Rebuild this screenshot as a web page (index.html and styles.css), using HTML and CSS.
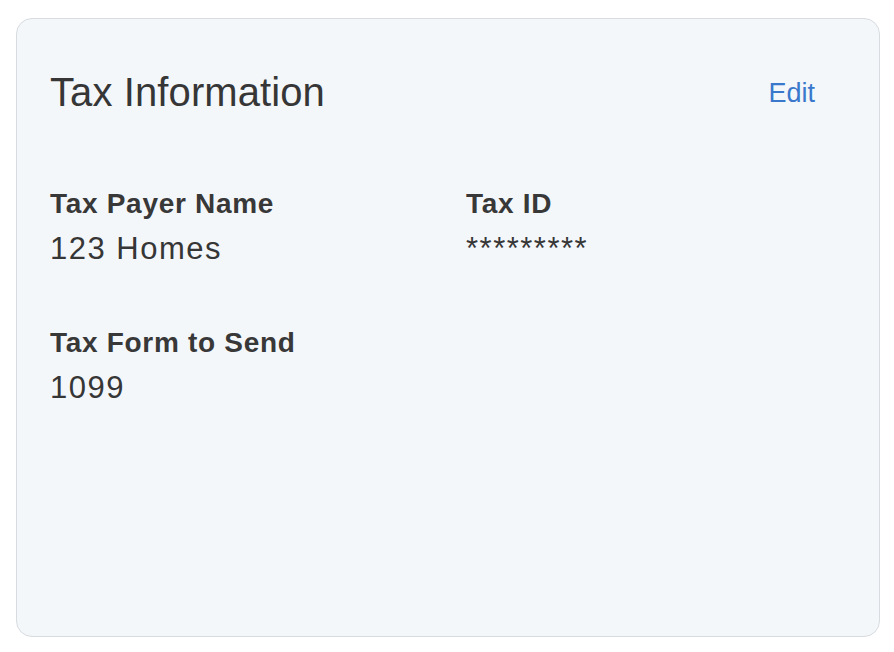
FILE: index.html
```html
<!DOCTYPE html>
<html>
<head>
<meta charset="utf-8">
<link rel="stylesheet" href="styles.css">
</head>
<body>
<section class="card">
  <header class="card-header">
    <h2 class="card-title">Tax Information</h2>
    <a class="edit-link" href="#">Edit</a>
  </header>
  <div class="fields">
    <div class="field">
      <div class="field-label">Tax Payer Name</div>
      <div class="field-value">123 Homes</div>
    </div>
    <div class="field">
      <div class="field-label">Tax ID</div>
      <div class="field-value">*********</div>
    </div>
    <div class="field">
      <div class="field-label">Tax Form to Send</div>
      <div class="field-value">1099</div>
    </div>
  </div>
</section>
</body>
</html>
```
FILE: styles.css
```css
html, body {
  margin: 0;
  padding: 0;
  background: #ffffff;
}

body {
  padding: 18px 14px 15px 16px;
  font-family: "Liberation Sans", Arial, sans-serif;
  color: #363636;
}

.card {
  box-sizing: border-box;
  height: 619px;
  background: #f4f7fa;
  border: 1.5px solid #d8dbdf;
  border-radius: 16px;
  padding: 50px 64px 0 33px;
}

.card-header {
  display: flex;
  align-items: center;
  justify-content: space-between;
}

.card-title {
  margin: 0;
  font-size: 40px;
  line-height: 46px;
  font-weight: 400;
  letter-spacing: 0.1px;
  color: #363636;
}

.edit-link {
  font-size: 27px;
  line-height: 31px;
  margin-top: 3px;
  color: #3a78cc;
  text-decoration: none;
}

.fields {
  margin-top: 72px;
  display: grid;
  grid-template-columns: 416px 1fr;
  row-gap: 59px;
}

.field-label {
  font-size: 28px;
  line-height: 34px;
  font-weight: 700;
  letter-spacing: 0.7px;
  color: #383838;
}

.field-value {
  margin-top: 9px;
  font-size: 31px;
  line-height: 37px;
  letter-spacing: 1.5px;
  color: #363636;
}
```
